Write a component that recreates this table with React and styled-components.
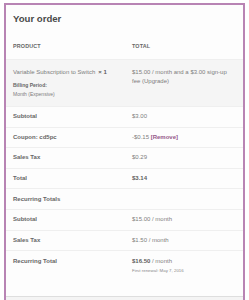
import React from "react";
import styled, { createGlobalStyle } from "styled-components";

const Global = createGlobalStyle`
  html, body { margin: 0; padding: 0; background: #ffffff; }
  body { font-family: "Liberation Sans", Arial, Helvetica, sans-serif; }
  * { box-sizing: border-box; }
`;

const Card = styled.div`
  margin: 3px 4px 0 4px;
  height: 297px;
  border: 2px solid #b884b4;
  border-bottom: 0;
  background: #fdfdfd;
  display: flex;
  flex-direction: column;
  overflow: hidden;
`;

const Title = styled.h2`
  margin: 0;
  padding: 8px 7px 8px;
  height: 28px;
  font-size: 9.6px;
  line-height: 12px;
  font-weight: 700;
  color: #4a4a4a;
`;

const Row = styled.div`
  display: grid;
  grid-template-columns: 119px 1fr;
  padding: 0 7px;
  height: ${(p) => p.$h || "20.6px"};
  align-items: ${(p) => (p.$top ? "start" : "center")};
  padding-top: ${(p) => p.$pt || "0"};
  border-top: ${(p) => (p.$noBorder ? "0" : "1px solid #efefef")};
  background: ${(p) => p.$bg || "transparent"};
  flex: ${(p) => (p.$grow ? "1" : "none")};
`;

const Head = styled.div`
  font-size: 5.4px;
  line-height: 9px;
  font-weight: 700;
  letter-spacing: 0.15px;
  text-transform: uppercase;
  color: #666666;
`;

const Label = styled.div`
  font-size: 6px;
  line-height: 9px;
  font-weight: ${(p) => (p.$bold ? 700 : 400)};
  color: ${(p) => (p.$bold ? "#666666" : "#7d7d7d")};
`;

const Value = styled.div`
  font-size: 6px;
  line-height: 9px;
  color: #7d7d7d;
`;

const Strong = styled.strong`
  font-weight: 700;
  color: #5e5e5e;
`;

const Qty = styled.strong`
  font-weight: 700;
  color: #5e5e5e;
  margin-left: 3px;
`;

const Meta = styled.div`
  margin-top: 4px;
`;

const MetaKey = styled.div`
  font-size: 5px;
  line-height: 9px;
  font-weight: 700;
  color: #666666;
`;

const MetaVal = styled.div`
  font-size: 5px;
  line-height: 9px;
  color: #7d7d7d;
`;

const Remove = styled.a`
  color: #96588a;
  font-weight: 700;
  text-decoration: none;
`;

const Small = styled.div`
  font-size: 4.4px;
  line-height: 6px;
  margin-top: 2.5px;
  color: #8a8a8a;
`;

const Footer = styled.div`
  height: 4px;
  border-top: 1px solid #dedede;
  background: #f4f4f4;
  flex: none;
`;

export default function App() {
  return (
    <>
      <Global />
      <Card>
        <Title>Your order</Title>
        <Row $h="26px" $noBorder>
          <Head>Product</Head>
          <Head>Total</Head>
        </Row>
        <Row $h="47px" $top $pt="7.5px" $bg="#f5f5f5">
          <div>
            <Label>
              Variable Subscription to Switch<Qty>× 1</Qty>
            </Label>
            <Meta>
              <MetaKey>Billing Period:</MetaKey>
              <MetaVal>Month (Expensive)</MetaVal>
            </Meta>
          </div>
          <Value>$15.00 / month and a $3.00 sign-up fee (Upgrade)</Value>
        </Row>
        <Row>
          <Label $bold>Subtotal</Label>
          <Value>$3.00</Value>
        </Row>
        <Row>
          <Label $bold>Coupon: cd5pc</Label>
          <Value>
            -$0.15 <Remove href="#">[Remove]</Remove>
          </Value>
        </Row>
        <Row>
          <Label $bold>Sales Tax</Label>
          <Value>$0.29</Value>
        </Row>
        <Row>
          <Label $bold>Total</Label>
          <Value>
            <Strong>$3.14</Strong>
          </Value>
        </Row>
        <Row>
          <Label $bold>Recurring Totals</Label>
          <Value />
        </Row>
        <Row>
          <Label $bold>Subtotal</Label>
          <Value>$15.00 / month</Value>
        </Row>
        <Row>
          <Label $bold>Sales Tax</Label>
          <Value>$1.50 / month</Value>
        </Row>
        <Row $top $pt="5.5px" $grow $h="auto">
          <Label $bold>Recurring Total</Label>
          <div>
            <Value>
              <Strong>$16.50</Strong> / month
            </Value>
            <Small>First renewal: May 7, 2016</Small>
          </div>
        </Row>
        <Footer />
      </Card>
    </>
  );
}
